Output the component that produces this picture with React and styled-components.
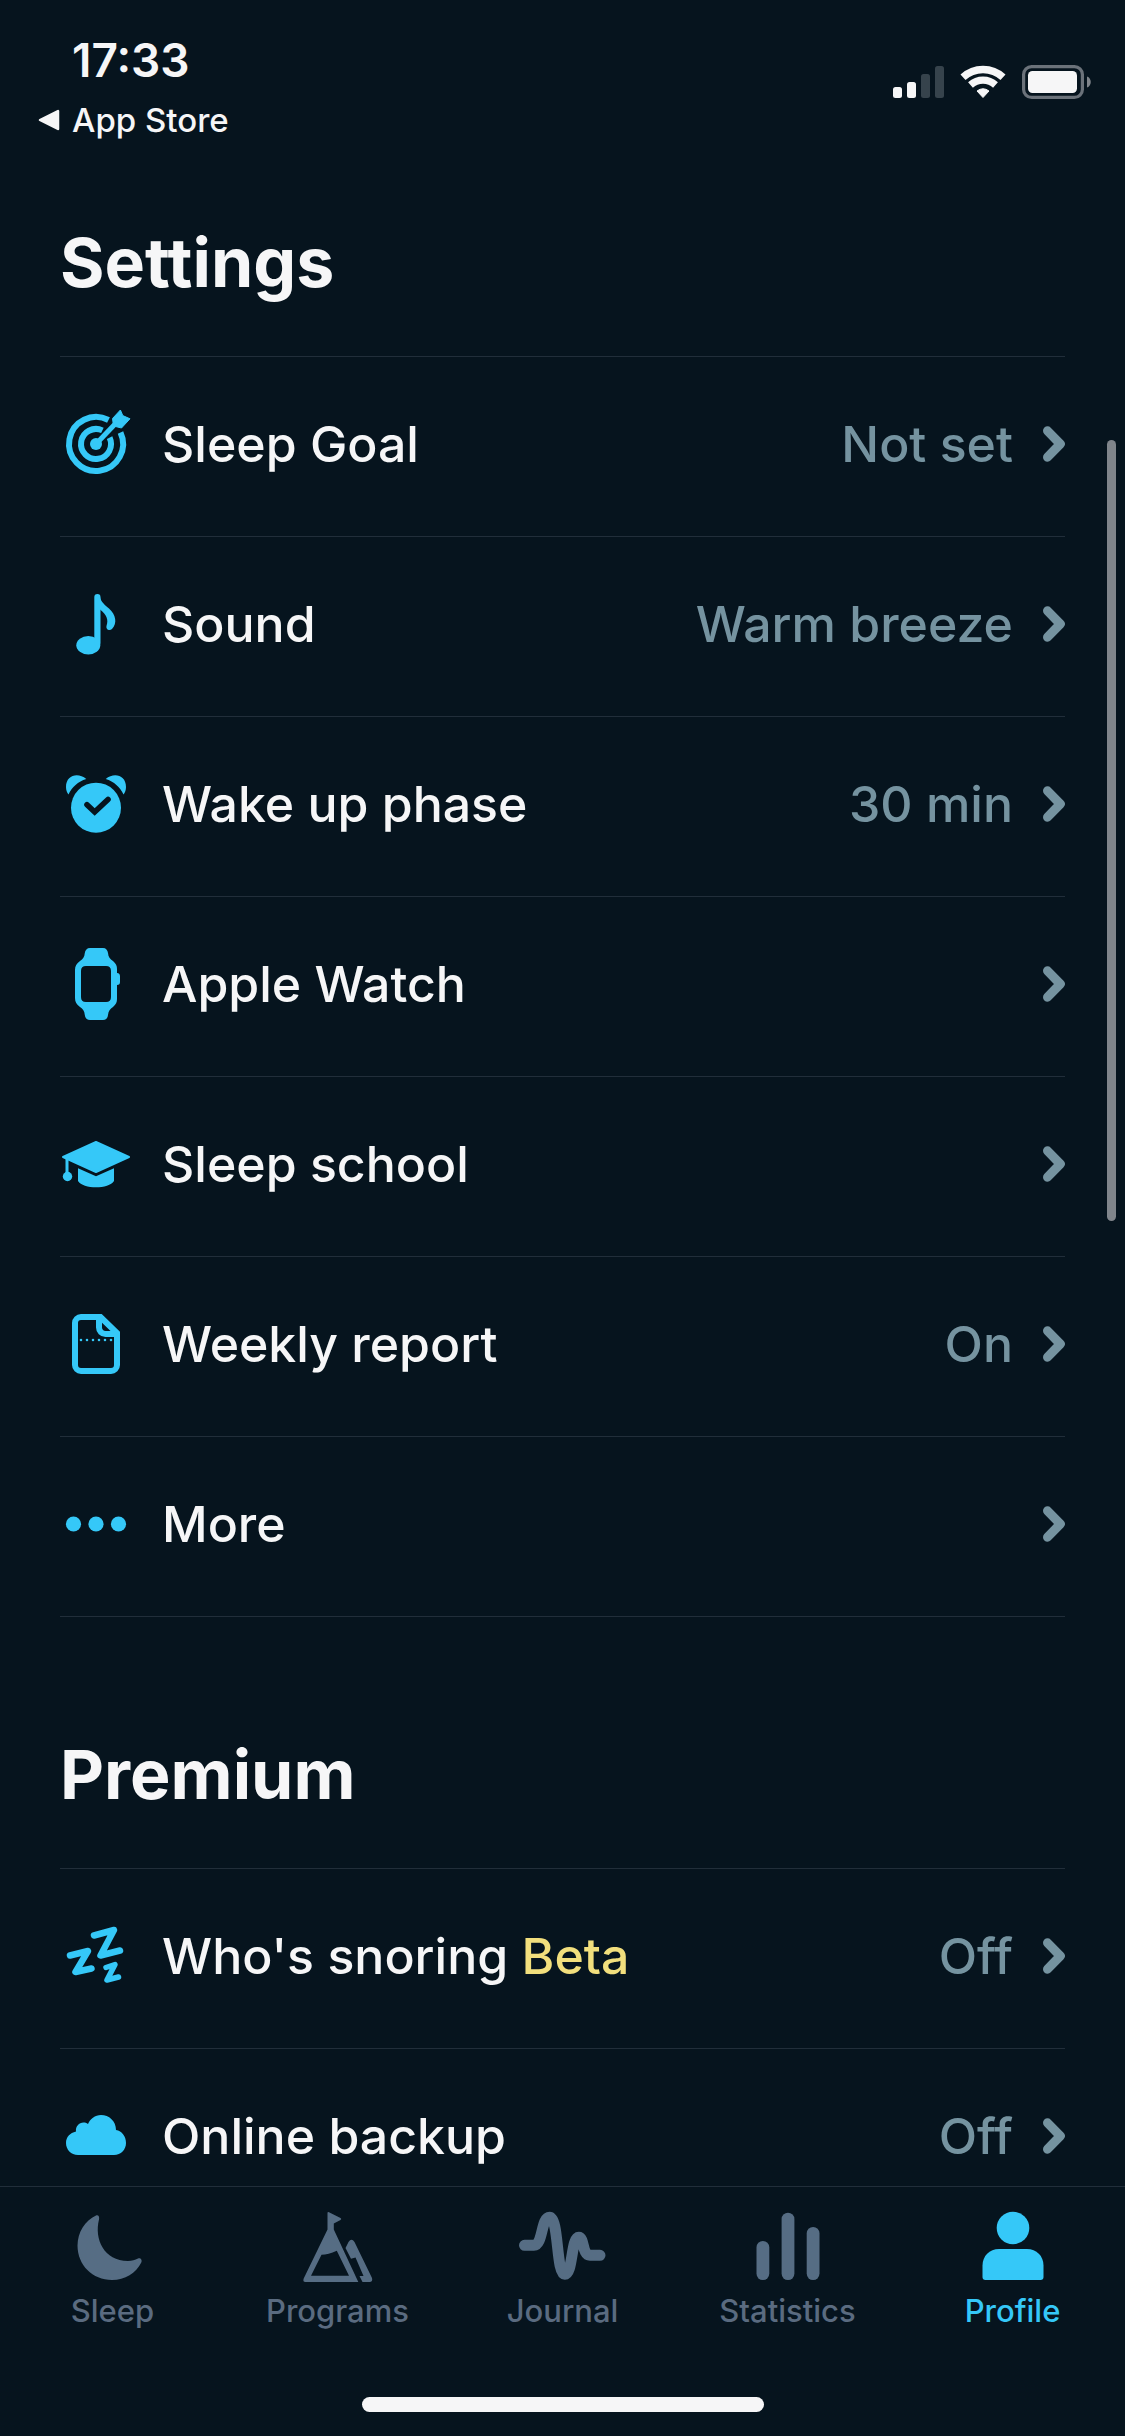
import styled, { createGlobalStyle, ThemeProvider } from "styled-components";
import { useState } from "react";

const theme = {
  background: "#06141e",
  line: "#212e3a",
  text: "#f6f6f7",
  value: "#7593a0",
  accent: "#35c8f8",
  muted: "#566d84",
  mutedText: "#5a6b80",
  beta: "#f2df7d",
};

const GlobalStyle = createGlobalStyle`
  * {
    box-sizing: border-box;
  }

  body {
    margin: 0;
    background: ${theme.background};
    color: ${theme.text};
    font-family: Inter, "Liberation Sans", sans-serif;
  }
`;

const Screen = styled.div`
  display: flex;
  flex-direction: column;
  height: 100vh;
  overflow: hidden;
`;

const StatusBar = styled.header`
  display: flex;
  justify-content: space-between;
  align-items: flex-start;
  padding: 30px 33px 10px 38px;
`;

const StatusLeft = styled.div`
  display: flex;
  flex-direction: column;
  gap: 10px;
`;

const Time = styled.time`
  padding-left: 34px;
  font-size: 46px;
  line-height: 60px;
  font-weight: 600;
`;

const BackLink = styled.a`
  display: flex;
  align-items: center;
  gap: 12px;
  font-size: 33px;
  line-height: 40px;
  font-weight: 500;
  color: inherit;
  text-decoration: none;
`;

const StatusIcons = styled.div`
  display: flex;
  gap: 16px;
  padding-top: 35px;
`;

const Main = styled.main`
  position: relative;
  flex: 1;
  min-height: 0;
  overflow: hidden;
`;

const ScrollThumb = styled.div`
  position: absolute;
  top: 290px;
  right: 9px;
  width: 9px;
  height: 781px;
  border-radius: 5px;
  background: #80858b;
`;

const Section = styled.section`
  padding: 0 60px;
`;

const Title = styled.h2`
  margin: 0;
  padding: ${(props) => (props.$first ? "72px" : "117px")} 0 54px;
  border-bottom: 1px solid ${(props) => props.theme.line};
  font-size: 68px;
  line-height: 80px;
  font-weight: 700;
`;

const List = styled.ul`
  margin: 0;
  padding: 0;
  list-style: none;
`;

const Row = styled.button`
  display: flex;
  align-items: center;
  gap: 30px;
  width: 100%;
  min-height: 180px;
  padding: 0 0 6px;
  border: 0;
  border-bottom: 1px solid ${(props) => props.theme.line};
  background: none;
  color: ${(props) => props.theme.text};
  font: inherit;
  font-size: 50px;
  line-height: 60px;
  font-weight: 500;
  text-align: left;
  cursor: pointer;
`;

const RowIcon = styled.svg`
  flex: none;
  width: 72px;
  height: 72px;
  color: ${(props) => props.theme.accent};
`;

const Label = styled.span`
  flex: 1;
`;

const Beta = styled.span`
  color: ${(props) => props.theme.beta};
`;

const Value = styled.span`
  color: ${(props) => props.theme.value};
`;

const Chevron = styled.svg`
  flex: none;
  width: 22px;
  height: 36px;
  color: ${(props) => props.theme.value};
`;

const TabBar = styled.footer`
  border-top: 1px solid ${(props) => props.theme.line};
`;

const Tabs = styled.nav`
  display: grid;
  grid-template-columns: repeat(5, 1fr);
  padding-top: 23px;
`;

const Tab = styled.a`
  display: flex;
  flex-direction: column;
  align-items: center;
  gap: 9px;
  font-size: 31px;
  line-height: 40px;
  font-weight: 500;
  text-decoration: none;
  color: ${(props) =>
    props.$active ? props.theme.accent : props.theme.mutedText};
`;

const TabIcon = styled.svg`
  width: 90px;
  height: 72px;
  color: ${(props) => (props.$active ? props.theme.accent : props.theme.muted)};
`;

const HomeIndicator = styled.div`
  width: 402px;
  height: 15px;
  margin: 66px auto 24px;
  border-radius: 8px;
  background: ${(props) => props.theme.text};
`;

const icons = {
  goal: (
    <g fill="none" stroke="currentColor" strokeWidth="6">
      <path d="M60.5 24.5 A27 27 0 1 1 48.5 12" />
      <path d="M49.6 29.6 A15 15 0 1 1 42.4 22.4" />
      <path d="M36 36 L57 14" strokeWidth="5" />
      <circle cx="36" cy="36" r="6" fill="currentColor" stroke="none" />
      <path
        d="M60.4 2 L62.8 7.6 L70 10.8 L61.5 20 L53.5 18 L52.5 10.5 Z"
        fill="currentColor"
        strokeWidth="1"
        strokeLinejoin="round"
      />
    </g>
  ),
  sound: (
    <g fill="currentColor">
      <ellipse cx="28.3" cy="57.2" rx="12" ry="9.2" />
      <rect x="34.3" y="6" width="6.2" height="52" rx="3.1" />
      <path d="M40 9 C41 14 45 17 49 20.5 C56 27 57.5 35 52 41 C49.5 43.5 45.5 41.5 46.6 37.5 C48.5 32 47 27 40 21.5 Z" />
    </g>
  ),
  alarm: (
    <g fill="currentColor">
      <circle cx="36" cy="39.7" r="25" />
      <path d="M26.3 11 C18 4 6 7 6 19 C6 22 7 25 8.5 26.5 C12 19 18 13.5 26.3 11 Z" />
      <path d="M45.7 11 C54 4 66 7 66 19 C66 22 65 25 63.5 26.5 C60 19 54 13.5 45.7 11 Z" />
      <path
        d="M27 36.7 L34.7 44 L48 31.5"
        fill="none"
        stroke={theme.background}
        strokeWidth="5.6"
        strokeLinecap="round"
      />
    </g>
  ),
  watch: (
    <path
      fill="currentColor"
      fillRule="evenodd"
      d="M30 0 H43 C46 0 47.6 2 48 5 C48.3 9 50 11 53 13 C56 15.5 57 18 57 21 V25 C59.2 25 60 26.5 60 28.5 V34 C60 36 59.2 37 57 37 V51 C57 54 56 56.5 53 59 C50 61 48.5 63 48 67 C47.6 70 46 72 43 72 H30 C27 72 25.2 70 24.8 67 C24.4 63 23 61 20 59 C16.5 56.5 15 54 15 50 V22 C15 18 16.5 15.5 20 13 C23 11 24.4 9 24.8 5 C25.2 2 27 0 30 0 Z M26 18 C22.6 18 21 19.6 21 23 V49 C21 52.4 22.6 54 26 54 H46 C49.4 54 51 52.4 51 49 V23 C51 19.6 49.4 18 46 18 Z"
    />
  ),
  school: (
    <g fill="currentColor">
      <path
        d="M36 14 L69 29 L36 44 L3 29 Z"
        stroke="currentColor"
        strokeWidth="2"
        strokeLinejoin="round"
      />
      <path d="M5.5 29 H8.5 V46 H5.5 Z" />
      <circle cx="7.5" cy="48.5" r="4.7" />
      <path d="M18 40.3 L36 48.3 L54 40.3 V53 C49 61.4 23 61.4 18 53 Z" />
    </g>
  ),
  report: (
    <g fill="none" stroke="currentColor" strokeWidth="6">
      <path d="M21 9 H40.5 L57 25 V57 A6 6 0 0 1 51 63 H21 A6 6 0 0 1 15 57 V15 A6 6 0 0 1 21 9 Z" />
      <path d="M39 9 V19.5 A6.5 6.5 0 0 0 45.5 26 H57" />
      <path
        d="M21 32 H52"
        strokeWidth="2.6"
        strokeLinecap="round"
        strokeDasharray="0 6"
      />
    </g>
  ),
  more: (
    <g fill="currentColor">
      <circle cx="13.5" cy="36" r="7.6" />
      <circle cx="36" cy="36" r="7.6" />
      <circle cx="58.5" cy="36" r="7.6" />
    </g>
  ),
  snoring: (
    <g
      fill="none"
      stroke="currentColor"
      strokeLinecap="round"
      strokeLinejoin="round"
    >
      <path d="M34 15.5 L54 10 L40.5 35.5 L60 30.5" strokeWidth="6.5" />
      <path d="M10 35.5 L28 31 L15.5 52 L31.5 48.5" strokeWidth="6.5" />
      <path d="M46 47.5 L55 44.5 L47 60 L58.5 57" strokeWidth="5.5" />
    </g>
  ),
  cloud: (
    <path
      fill="currentColor"
      d="M18 55 H54 C61 55 66 49.5 66 43 C66 36.5 62 31 56 30 C56 21 49 15 41 15 C35 15 30 19 28 24 C22 20 15 25 16 31.5 C10 33 6 37 6 43 C6 49.5 11 55 18 55 Z"
    />
  ),
  sleep: (
    <path
      fill="currentColor"
      d="M28 5.4 C30.5 4.5 31.7 7 31 9.5 C26 29 36 51 60 51 C64 51 67 50 70 48.5 C72.5 47.5 74.5 50 73.3 52.5 C68 63 57 70 44 70 C24.5 70 9.5 55 9.5 35.5 C9.5 22 17 10.5 28 5.4 Z"
    />
  ),
  programs: (
    <g fill="currentColor" fillRule="evenodd">
      <path d="M34.5 3 Q34.5 1.5 36 2.2 L47.5 8 Q49 9 47.5 10 L40.8 13.5 V19.5 L65.3 72 H12.5 Q9.5 72 10.7 68.5 L34.5 19.5 Z M28.5 44.7 C33 44.5 38 43.3 43.8 40.7 L56 65.7 H18 Z" />
      <path d="M52.5 38 L55.5 32 Q58.5 27.5 61.5 32 L79 68 Q80 72 76.5 72 H69.5 L66.5 66 H70.5 L62.5 47.5 L58 48.8 Z" />
    </g>
  ),
  journal: (
    <path
      fill="none"
      stroke="currentColor"
      strokeWidth="11"
      strokeLinecap="round"
      d="M6.5 35.3 H16 C25 35.3 23 7.3 31.6 7.3 C41 7.3 38 64.3 46.8 64.3 C55 64.3 53 27.3 60.8 27.3 C66.5 27.3 64 45.3 72 45.3 H82"
    />
  ),
  statistics: (
    <g fill="currentColor">
      <rect x="13.5" y="31" width="12.8" height="39" rx="6.4" />
      <rect x="38.6" y="2.7" width="12.8" height="67.3" rx="6.4" />
      <rect x="63.7" y="17" width="12.8" height="53" rx="6.4" />
    </g>
  ),
  profile: (
    <g fill="currentColor">
      <circle cx="45" cy="18" r="16.3" />
      <path d="M31 39 H59 C68.5 39 75.5 46 75.5 55.5 V67 Q75.5 70 72.5 70 H17.5 Q14.5 70 14.5 67 V55.5 C14.5 46 21.5 39 31 39 Z" />
    </g>
  ),
};

const settings = [
  { icon: "goal", label: "Sleep Goal", value: "Not set" },
  { icon: "sound", label: "Sound", value: "Warm breeze" },
  { icon: "alarm", label: "Wake up phase", value: "30 min" },
  { icon: "watch", label: "Apple Watch" },
  { icon: "school", label: "Sleep school" },
  { icon: "report", label: "Weekly report", value: "On" },
  { icon: "more", label: "More" },
];

const premium = [
  { icon: "snoring", label: "Who's snoring", value: "Off", beta: true },
  { icon: "cloud", label: "Online backup", value: "Off" },
];

const tabs = [
  { id: "sleep", label: "Sleep" },
  { id: "programs", label: "Programs" },
  { id: "journal", label: "Journal" },
  { id: "statistics", label: "Statistics" },
  { id: "profile", label: "Profile" },
];

function SettingsSection({ title, items, first }) {
  return (
    <Section>
      <Title $first={first}>{title}</Title>
      <List>
        {items.map((item) => (
          <li key={item.label}>
            <Row type="button">
              <RowIcon viewBox="0 0 72 72" aria-hidden="true">
                {icons[item.icon]}
              </RowIcon>
              <Label>
                {item.label}
                {item.beta && <Beta> Beta</Beta>}
              </Label>
              {item.value && <Value>{item.value}</Value>}
              <Chevron viewBox="0 0 22 36" aria-hidden="true">
                <path
                  d="M4.5 4.8 L17.3 18 L4.5 31.2"
                  fill="none"
                  stroke="currentColor"
                  strokeWidth="9"
                  strokeLinecap="round"
                  strokeLinejoin="round"
                />
              </Chevron>
            </Row>
          </li>
        ))}
      </List>
    </Section>
  );
}

function App() {
  const [activeTab, setActiveTab] = useState("profile");

  return (
    <ThemeProvider theme={theme}>
      <GlobalStyle />
      <Screen>
        <StatusBar>
          <StatusLeft>
            <Time>17:33</Time>
            <BackLink href="#app-store">
              <svg width="22" height="22" viewBox="0 0 22 22" aria-hidden="true">
                <path
                  d="M2 11 L20 2 V20 Z"
                  fill="currentColor"
                  stroke="currentColor"
                  strokeWidth="2.5"
                  strokeLinejoin="round"
                />
              </svg>
              App Store
            </BackLink>
          </StatusLeft>
          <StatusIcons aria-hidden="true">
            <svg width="52" height="34" viewBox="0 0 52 34" fill="#f6f6f7">
              <rect x="1" y="22" width="9" height="11" rx="2.5" />
              <rect x="15" y="17" width="9" height="16" rx="2.5" />
              <rect x="29" y="9" width="9" height="24" rx="2.5" fill="#36434c" />
              <rect x="43" y="1" width="9" height="32" rx="2.5" fill="#36434c" />
            </svg>
            <svg width="46" height="34" viewBox="0 0 46 34" fill="none" stroke="#f6f6f7">
              <path d="M3 12.3 A29.5 29.5 0 0 1 43 12.3" strokeWidth="7.4" />
              <path d="M10.5 20 A18.7 18.7 0 0 1 35.5 20" strokeWidth="7.2" />
              <path
                d="M17 26 A10 10 0 0 1 29 26 L23 32.5 Z"
                fill="#f6f6f7"
                strokeWidth="1"
                strokeLinejoin="round"
              />
            </svg>
            <svg width="70" height="34" viewBox="0 0 70 34">
              <rect
                x="1.6"
                y="1.6"
                width="58.8"
                height="30.8"
                rx="8"
                fill="none"
                stroke="#6b727a"
                strokeWidth="3.2"
              />
              <rect x="6" y="6" width="49" height="22" rx="4.5" fill="#f6f6f7" />
              <path d="M65 11.5 C70 13 70 21 65 22.5 Z" fill="#80858b" />
            </svg>
          </StatusIcons>
        </StatusBar>

        <Main>
          <SettingsSection title="Settings" items={settings} first />
          <SettingsSection title="Premium" items={premium} />
          <ScrollThumb />
        </Main>

        <TabBar>
          <Tabs>
            {tabs.map((tab) => (
              <Tab
                key={tab.id}
                href={"#" + tab.id}
                $active={tab.id === activeTab}
                onClick={() => setActiveTab(tab.id)}
              >
                <TabIcon
                  viewBox="0 0 90 72"
                  aria-hidden="true"
                  $active={tab.id === activeTab}
                >
                  {icons[tab.id]}
                </TabIcon>
                {tab.label}
              </Tab>
            ))}
          </Tabs>
          <HomeIndicator />
        </TabBar>
      </Screen>
    </ThemeProvider>
  );
}

export default App;
